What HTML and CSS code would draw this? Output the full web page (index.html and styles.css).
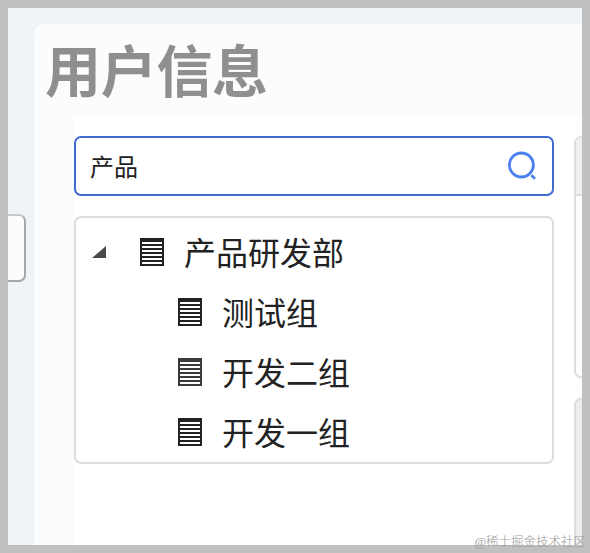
FILE: index.html
```
<!DOCTYPE html>
<html lang="zh-CN">
<head>
    <meta charset="UTF-8">
    <meta name="viewport" content="width=device-width, initial-scale=1.0">
    <title>用户信息</title>
    <link rel="stylesheet" href="styles.css">
</head>
<body>
    <div class="page">
        <aside class="side">
            <div class="side-box"></div>
        </aside>
        <main class="panel">
            <h1>用户信息</h1>
            <div class="content">
                <section class="dept">
                    <div class="search">
                        <span>产品</span>
                        <svg width="32" height="32" viewBox="0 0 32 32" fill="none" stroke="#4b80ee" stroke-width="2.8">
                            <circle cx="15.4" cy="15" r="12"/>
                            <path d="M25.4 25.2l3.6 3.6"/>
                        </svg>
                    </div>
                    <ul class="tree">
                        <li><i class="arrow"></i><i class="icon"></i><span>产品研发部</span></li>
                        <li class="child"><i class="icon"></i><span>测试组</span></li>
                        <li class="child"><i class="icon icon-soft"></i><span>开发二组</span></li>
                        <li class="child"><i class="icon"></i><span>开发一组</span></li>
                    </ul>
                </section>
                <section class="detail">
                    <div class="card"><div class="card-head"></div></div>
                    <div class="card card-next"></div>
                </section>
            </div>
        </main>
    </div>
    <div class="watermark">@稀土掘金技术社区</div>
</body>
</html>
```
FILE: styles.css
```
* { margin: 0; padding: 0; box-sizing: border-box; }
body { position: relative; width: 590px; height: 553px; color: #222; font-family: "Noto Sans CJK SC", sans-serif; overflow: hidden; }
.page { display: flex; height: 553px; border: 8px solid #c0c0c0; background: #eff4f8; overflow: hidden; }
.side { width: 26px; flex: none; padding-top: 206px; }
.side-box { width: 18px; height: 68px; border: 2px solid #a6a8aa; border-top-color: #c6c8ca; border-left: none; border-radius: 0 7px 7px 0; background: #fbfcfd; }
.panel { flex: 1; min-width: 0; margin-top: 16px; border-top-left-radius: 10px; background: #fbfcfe; }
h1 { height: 92px; padding-left: 11px; font-size: 56px; line-height: 88px; font-weight: 700; letter-spacing: -0.3px; color: #8e8f91; }
.content { display: flex; gap: 20px; height: 429px; margin-left: 40px; padding-top: 20px; background: #fff; overflow: hidden; }
.dept { width: 480px; flex: none; }
.search { display: flex; align-items: center; justify-content: space-between; height: 60px; padding: 0 14px; border: 2px solid #3d6bd0; border-radius: 7px; font-size: 24px; line-height: 56px; }
.tree { height: 248px; margin-top: 20px; padding: 4px 14px 0 16px; border: 2px solid #ddd; border-radius: 7px; list-style: none; }
.tree li { display: flex; align-items: center; height: 60px; font-size: 32px; line-height: 58px; }
.tree li span { height: 60px; }
.tree .child { padding-left: 86px; }
.arrow { width: 14px; height: 12px; margin-right: 34px; background: #4a4a4a; clip-path: polygon(100% 0, 100% 100%, 0 100%); }
.icon { width: 24px; height: 28px; margin-right: 20px; border: solid #222; border-width: 4px 2px 0; background: repeating-linear-gradient(#fff 0 2px, #222 2px 4px); }
.icon-soft { border-color: #3a3a3a; background: repeating-linear-gradient(#fff 0 2px, #3a3a3a 2px 4px); }
.detail { width: 100px; flex: none; }
.card { height: 242px; border: 2px solid #ddd; border-radius: 7px; overflow: hidden; }
.card-head { height: 58px; border-bottom: 2px solid #ddd; background: #efefef; }
.card-next { margin-top: 20px; background: #ededed; }
.watermark { position: absolute; right: 4px; bottom: 1px; font-family: "Liberation Serif", "Noto Sans CJK SC", serif; font-size: 12.5px; line-height: 20px; font-weight: 300; color: #999; }
```
